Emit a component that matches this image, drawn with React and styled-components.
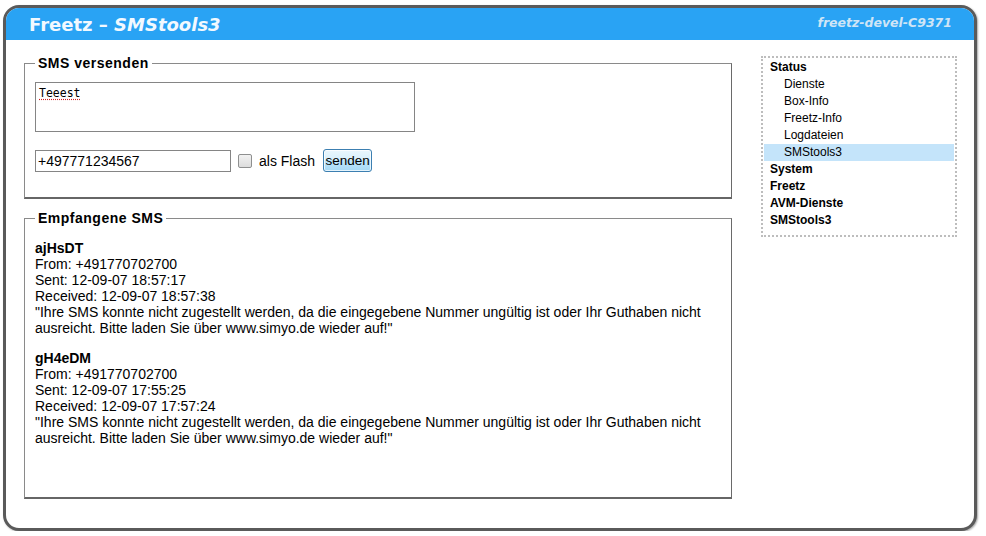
import React from "react";
import styled, { createGlobalStyle } from "styled-components";

const GlobalStyle = createGlobalStyle`
  html, body {
    margin: 0;
    padding: 0;
    background: #ffffff;
  }
  body {
    font-family: "Liberation Sans", Arial, sans-serif;
    color: #000;
  }
`;

const menu = [
  { label: "Status", children: ["Dienste", "Box-Info", "Freetz-Info", "Logdateien", "SMStools3"] },
  { label: "System" },
  { label: "Freetz" },
  { label: "AVM-Dienste" },
  { label: "SMStools3" }
];

const messages = [
  {
    id: "ajHsDT",
    from: "+491770702700",
    sent: "12-09-07 18:57:17",
    received: "12-09-07 18:57:38",
    text:
      "\"Ihre SMS konnte nicht zugestellt werden, da die eingegebene Nummer ungültig ist oder Ihr Guthaben nicht ausreicht. Bitte laden Sie über www.simyo.de wieder auf!\""
  },
  {
    id: "gH4eDM",
    from: "+491770702700",
    sent: "12-09-07 17:55:25",
    received: "12-09-07 17:57:24",
    text:
      "\"Ihre SMS konnte nicht zugestellt werden, da die eingegebene Nummer ungültig ist oder Ihr Guthaben nicht ausreicht. Bitte laden Sie über www.simyo.de wieder auf!\""
  }
];

export default function App() {
  return (
    <>
      <GlobalStyle />
      <StyledFrame>
        <StyledHeader>
          <StyledTitle>
            Freetz – <em>SMStools3</em>
          </StyledTitle>
          <StyledHost>freetz-devel-C9371</StyledHost>
        </StyledHeader>
        <StyledBody>
          <StyledMain>
            <StyledFieldset>
              <StyledLegend>SMS versenden</StyledLegend>
              <StyledTextarea defaultValue="Teeest" spellCheck={false} />
              <StyledSendRow>
                <StyledInput type="text" defaultValue="+497771234567" />
                <StyledCheckbox type="checkbox" id="flash" />
                <StyledCheckLabel htmlFor="flash">als Flash</StyledCheckLabel>
                <StyledButton type="button">senden</StyledButton>
              </StyledSendRow>
            </StyledFieldset>
            <StyledFieldset $gap>
              <StyledLegend>Empfangene SMS</StyledLegend>
              <StyledMessages>
                {messages.map(m => (
                  <StyledMessage key={m.id}>
                    <StyledMessageId>{m.id}</StyledMessageId>
                    <div>From: {m.from}</div>
                    <div>Sent: {m.sent}</div>
                    <div>Received: {m.received}</div>
                    <div>{m.text}</div>
                  </StyledMessage>
                ))}
              </StyledMessages>
            </StyledFieldset>
          </StyledMain>
          <StyledMenu>
            {menu.map(group => (
              <li key={group.label + (group.children ? "-g" : "")}>
                <StyledMenuItem $top>{group.label}</StyledMenuItem>
                {group.children &&
                  group.children.map(child => (
                    <StyledMenuItem key={child} $active={child === "SMStools3"}>
                      {child}
                    </StyledMenuItem>
                  ))}
              </li>
            ))}
          </StyledMenu>
        </StyledBody>
      </StyledFrame>
    </>
  );
}

const StyledFrame = styled.div`
  box-sizing: border-box;
  margin: 5px 0 0 3px;
  width: 974px;
  border: 3px solid #5a5a5a;
  border-radius: 16px;
  overflow: hidden;
  background: #fff;
  box-shadow: 1px 1px 2px rgba(0, 0, 0, 0.35);
`;

const StyledHeader = styled.div`
  height: 32px;
  background: #29a3f4;
  display: flex;
  align-items: center;
  justify-content: space-between;
  padding: 0 22px 0 23px;
`;

const StyledTitle = styled.div`
  font-family: "DejaVu Sans", Verdana, sans-serif;
  font-weight: bold;
  font-size: 18px;
  color: #f2f9ff;
  em {
    font-style: italic;
  }
`;

const StyledHost = styled.div`
  font-family: "DejaVu Sans", Verdana, sans-serif;
  font-weight: bold;
  font-style: italic;
  font-size: 12.5px;
  color: #cfe5f6;
  margin-top: -4px;
`;

const StyledBody = styled.div`
  display: flex;
  align-items: flex-start;
  gap: 29px;
  padding: 15px 17px 29px 18px;
`;

const StyledMain = styled.div`
  width: 708px;
  display: flex;
  flex-direction: column;
`;

const StyledFieldset = styled.fieldset`
  margin: ${p => (p.$gap ? "11px 0 0" : "0")};
  padding: ${p => (p.$gap ? "14px 10px 0" : "11px 10px 25px")};
  border: 1px solid #8a8a8a;
  border-right-color: #6a6a6a;
  border-bottom: 2px solid #666;
  min-width: 0;
`;

const StyledLegend = styled.legend`
  padding: 0 3px;
  font-size: 14px;
  line-height: 16px;
  font-weight: bold;
  letter-spacing: 0.5px;
`;

const StyledTextarea = styled.textarea`
  display: block;
  box-sizing: border-box;
  width: 380px;
  height: 50px;
  margin: 0;
  padding: 3px 3px;
  border: 1px solid #858585;
  resize: none;
  font-family: "DejaVu Sans Mono", monospace;
  font-size: 11.5px;
  line-height: 14px;
  color: #000;
  text-decoration: underline dotted #d02020;
  text-underline-offset: 2px;
  outline: none;
`;

const StyledSendRow = styled.div`
  display: flex;
  align-items: center;
  margin-top: 17px;
`;

const StyledInput = styled.input`
  box-sizing: border-box;
  width: 196px;
  height: 22px;
  margin: 0;
  padding: 0 2px;
  border: 1px solid #858585;
  font-family: "Liberation Sans", Arial, sans-serif;
  font-size: 14px;
  color: #000;
  outline: none;
`;

const StyledCheckbox = styled.input`
  appearance: none;
  box-sizing: border-box;
  width: 14px;
  height: 14px;
  margin: 0 0 0 7px;
  border: 1px solid #8e8f8f;
  border-radius: 2px;
  background: linear-gradient(#f2f2f2, #dcdcdc);
`;

const StyledCheckLabel = styled.label`
  font-size: 14px;
  margin-left: 7px;
  margin-right: 8px;
`;

const StyledButton = styled.button`
  box-sizing: border-box;
  width: 49px;
  height: 23px;
  padding: 0;
  border: 1px solid #3c7fb1;
  border-radius: 3px;
  background: linear-gradient(#eaf6fd 0%, #d9f0fc 45%, #bee6fd 50%, #a7d9f5 100%);
  box-shadow: inset 0 0 0 1px rgba(255, 255, 255, 0.7);
  font-family: "Liberation Sans", Arial, sans-serif;
  font-size: 13.5px;
  color: #000;
`;

const StyledMessages = styled.div`
  min-height: 257px;
  font-size: 14px;
  line-height: 16px;
`;

const StyledMessage = styled.div`
  margin-bottom: 14px;
`;

const StyledMessageId = styled.div`
  font-weight: bold;
`;

const StyledMenu = styled.ul`
  box-sizing: border-box;
  width: 196px;
  margin: 1px 0 0;
  padding: 1px 1px 6px;
  list-style: none;
  border: 2px dotted #bdbdbd;
`;

const StyledMenuItem = styled.div`
  font-size: 12px;
  line-height: 17px;
  font-weight: ${p => (p.$top ? "bold" : "normal")};
  padding-left: ${p => (p.$top ? "6px" : "20px")};
  background: ${p => (p.$active ? "#c4e4fa" : "transparent")};
  color: #000;
`;
